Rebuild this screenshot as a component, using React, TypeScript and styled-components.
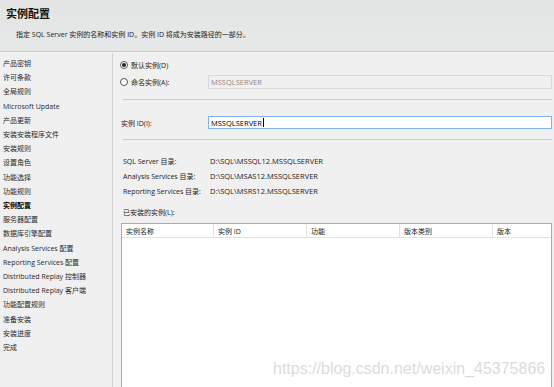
import React from 'react'
import styled, { createGlobalStyle } from 'styled-components'

const GlobalStyle = createGlobalStyle`
  html, body {
    margin: 0;
    padding: 0;
    background: #f0f0f0;
  }
  body {
    font-family: "Open Sans", "Noto Sans CJK SC", sans-serif;
    color: #222;
  }
`

const Window = styled.div`
  position: relative;
  width: 554px;
  height: 387px;
  overflow: hidden;
  display: flex;
  flex-direction: column;
  background: #f0f0f0;
`

const Header = styled.header`
  height: 52px;
  flex-shrink: 0;
  box-sizing: border-box;
  padding: 6px 0 0 6px;
  background: linear-gradient(#e3e4e4, #e7e8e8);
  border-bottom: 1px solid #c9c9c9;
`

const Title = styled.h1`
  margin: 0;
  font-size: 11px;
  line-height: 16px;
  font-weight: 700;
  color: #111;
`

const Subtitle = styled.p`
  margin: 7px 0 0 10px;
  font-size: 7px;
  line-height: 12px;
  color: #222;
`

const Body = styled.div`
  flex: 1;
  display: flex;
  border-top: 1px solid #f7f7f7;
  min-height: 0;
`

const Sidebar = styled.nav`
  width: 113px;
  flex-shrink: 0;
  box-sizing: border-box;
  padding: 4px 0 0 3px;
  border-right: 1px solid #d2d2d2;
`

const StepItem = styled.div<{ $active?: boolean }>`
  font-size: 7px;
  line-height: 14.2px;
  white-space: nowrap;
  color: ${(p) => (p.$active ? '#000' : '#2a2a2a')};
  font-weight: ${(p) => (p.$active ? 700 : 400)};
`

const Content = styled.main`
  flex: 1;
  box-sizing: border-box;
  padding: 5px 2px 0 7px;
  display: flex;
  flex-direction: column;
  font-size: 7px;
`

const RadioRow = styled.label`
  display: flex;
  align-items: center;
  height: 14px;
  gap: 3px;
`

const RadioDot = styled.span<{ $checked?: boolean }>`
  width: 8px;
  height: 8px;
  box-sizing: border-box;
  border-radius: 50%;
  border: 1px solid #555;
  background: #fff;
  display: flex;
  align-items: center;
  justify-content: center;

  &::after {
    content: '';
    width: 4px;
    height: 4px;
    border-radius: 50%;
    background: ${(p) => (p.$checked ? '#222' : 'transparent')};
  }
`

const FieldRow = styled.div<{ $gap: number; $indent?: number }>`
  display: flex;
  align-items: center;
  margin-top: ${(p) => p.$gap}px;
  margin-left: ${(p) => p.$indent ?? 1}px;
`

const FieldLabel = styled.span`
  width: 87px;
  flex-shrink: 0;
  white-space: nowrap;
`

const RadioFieldLabel = styled.span`
  width: 88px;
  flex-shrink: 0;
  display: flex;
  align-items: center;
  gap: 3px;
`

const TextBox = styled.div<{ $disabled?: boolean; $focused?: boolean }>`
  flex: 1;
  height: ${(p) => (p.$disabled ? 14 : 13)}px;
  box-sizing: border-box;
  display: flex;
  align-items: center;
  padding-left: 2px;
  font-size: 7.5px;
  background: ${(p) => (p.$disabled ? '#f0f0f0' : '#fff')};
  color: ${(p) => (p.$disabled ? '#8a8a8a' : '#000')};
  border: 1px solid ${(p) => (p.$focused ? '#7eb4ea' : p.$disabled ? '#d9d9d9' : '#adadad')};
`

const Caret = styled.span`
  display: inline-block;
  width: 1px;
  height: 9px;
  background: #000;
  margin-left: 1px;
`

const Divider = styled.hr`
  margin: 10px 0 0 3px;
  border: none;
  border-top: 1px solid #cfcfcf;
  height: 0;
`

const DirList = styled.div`
  display: flex;
  flex-direction: column;
  margin: 13px 0 0 3px;
`

const DirRow = styled.div`
  display: flex;
  align-items: center;
  height: 15px;
`

const DirLabel = styled.span`
  width: 87px;
  flex-shrink: 0;
  white-space: nowrap;
`

const DirValue = styled.span`
  font-size: 7.5px;
`

const SectionLabel = styled.div`
  margin: 9px 0 0 3px;
  line-height: 12px;
`

const Table = styled.div`
  flex: 1;
  margin: 4px 0 0 1px;
  background: #fff;
  border: 1px solid #ababab;
  border-bottom: none;
`

const HeaderRow = styled.div`
  display: grid;
  grid-template-columns: 92px 93px 93px 93px 1fr;
  height: 13px;
  border-bottom: 1px solid #e2e2e2;
`

const HeaderCell = styled.div`
  display: flex;
  align-items: center;
  padding-left: 4px;
  border-right: 1px solid #e2e2e2;
  white-space: nowrap;

  &:last-child {
    border-right: none;
  }
`

const Watermark = styled.div`
  position: absolute;
  left: 273px;
  top: 361px;
  font-family: "Liberation Sans", Arial, sans-serif;
  font-size: 16px;
  line-height: 16px;
  color: #dcdcdc;
  white-space: nowrap;
  pointer-events: none;
`

const steps = [
  '产品密钥',
  '许可条款',
  '全局规则',
  'Microsoft Update',
  '产品更新',
  '安装安装程序文件',
  '安装规则',
  '设置角色',
  '功能选择',
  '功能规则',
  '实例配置',
  '服务器配置',
  '数据库引擎配置',
  'Analysis Services 配置',
  'Reporting Services 配置',
  'Distributed Replay 控制器',
  'Distributed Replay 客户端',
  '功能配置规则',
  '准备安装',
  '安装进度',
  '完成',
]

const dirs = [
  { label: 'SQL Server 目录:', value: 'D:\\SQL\\MSSQL12.MSSQLSERVER' },
  { label: 'Analysis Services 目录:', value: 'D:\\SQL\\MSAS12.MSSQLSERVER' },
  { label: 'Reporting Services 目录:', value: 'D:\\SQL\\MSRS12.MSSQLSERVER' },
]

const columns = ['实例名称', '实例 ID', '功能', '版本类别', '版本']

export default function App() {
  return (
    <>
      <GlobalStyle />
      <Window>
        <Header>
          <Title>实例配置</Title>
          <Subtitle>指定 SQL Server 实例的名称和实例 ID。实例 ID 将成为安装路径的一部分。</Subtitle>
        </Header>
        <Body>
          <Sidebar>
            {steps.map((step) => (
              <StepItem key={step} $active={step === '实例配置'}>
                {step}
              </StepItem>
            ))}
          </Sidebar>
          <Content>
            <RadioRow>
              <RadioDot $checked />
              默认实例(D)
            </RadioRow>
            <FieldRow $gap={3} $indent={0}>
              <RadioFieldLabel>
                <RadioDot />
                命名实例(A):
              </RadioFieldLabel>
              <TextBox $disabled>MSSQLSERVER</TextBox>
            </FieldRow>
            <Divider />
            <FieldRow $gap={16}>
              <FieldLabel>实例 ID(I):</FieldLabel>
              <TextBox $focused>
                MSSQLSERVER
                <Caret />
              </TextBox>
            </FieldRow>
            <Divider />
            <DirList>
              {dirs.map((d) => (
                <DirRow key={d.label}>
                  <DirLabel>{d.label}</DirLabel>
                  <DirValue>{d.value}</DirValue>
                </DirRow>
              ))}
            </DirList>
            <SectionLabel>已安装的实例(L):</SectionLabel>
            <Table>
              <HeaderRow>
                {columns.map((c) => (
                  <HeaderCell key={c}>{c}</HeaderCell>
                ))}
              </HeaderRow>
            </Table>
          </Content>
        </Body>
        <Watermark>https://blog.csdn.net/weixin_45375866</Watermark>
      </Window>
    </>
  )
}
